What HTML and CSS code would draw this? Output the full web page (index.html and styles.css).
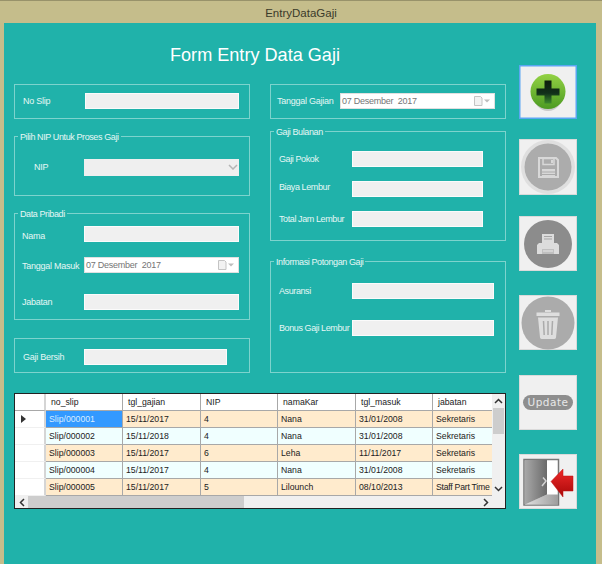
FILE: index.html
```html
<!DOCTYPE html>
<html lang="en">
<head>
    <meta charset="UTF-8">
    <meta name="viewport" content="width=device-width, initial-scale=1.0">
    <title>EntryDataGaji</title>
    <link rel="stylesheet" href="styles.css">
</head>
<body>

<div id="window">
    <div id="titlebar">EntryDataGaji</div>

    <div id="client">
        <div id="formArea">
            <h1>Form Entry Data Gaji</h1>

            <div id="columns">
                <div class="col">
                    <div class="group slipBox">
                        <div class="row"><label class="lblSlip">No Slip</label><input class="field w154" type="text"></div>
                    </div>

                    <div class="group nipBox">
                        <span class="legend">Pilih NIP Untuk Proses Gaji</span>
                        <div class="row rowTall"><label class="lblNip">NIP</label>
                            <div class="select">
                                <svg width="10" height="6" viewBox="0 0 10 6"><path d="M1 1l4 4 4-4" fill="none" stroke="#b5b5b5" stroke-width="1.5"/></svg>
                            </div>
                        </div>
                    </div>

                    <div class="group pribadiBox">
                        <span class="legend">Data Pribadi</span>
                        <div class="row"><label class="lblPribadi down2">Nama</label><input class="field w155" type="text"></div>
                        <div class="row gap15"><label class="lblPribadi down1">Tanggal Masuk</label>
                            <div class="date w155">
                                <span class="dateText">07 Desember&nbsp; 2017</span>
                                <svg width="18" height="10" viewBox="0 0 18 10"><path d="M1.500 .5h6l1.500 1.500v7.500h-7.500z" fill="#f2f2f2" stroke="#c4c4c4"/><path d="M11 3.500h6l-3 3z" fill="#bdbdbd"/></svg>
                            </div>
                        </div>
                        <div class="row gap21"><label class="lblPribadi">Jabatan</label><input class="field w155" type="text"></div>
                    </div>

                    <div class="group bersihBox">
                        <div class="row"><label class="lblSlip">Gaji Bersih</label><input class="field w143" type="text"></div>
                    </div>
                </div>

                <div class="col">
                    <div class="group slipBox">
                        <div class="row"><label class="lblTanggal">Tanggal Gajian</label>
                            <div class="date w155">
                                <span class="dateText">07 Desember&nbsp; 2017</span>
                                <svg width="18" height="10" viewBox="0 0 18 10"><path d="M1.500 .5h6l1.500 1.500v7.500h-7.500z" fill="#f2f2f2" stroke="#c4c4c4"/><path d="M11 3.500h6l-3 3z" fill="#bdbdbd"/></svg>
                            </div>
                        </div>
                    </div>

                    <div class="group bulananBox">
                        <span class="legend">Gaji Bulanan</span>
                        <div class="row"><label class="lblRight">Gaji Pokok</label><input class="field w131" type="text"></div>
                        <div class="row gap14"><label class="lblRight up3">Biaya Lembur</label><input class="field w131" type="text"></div>
                        <div class="row gap14"><label class="lblRight">Total Jam Lembur</label><input class="field w131" type="text"></div>
                    </div>

                    <div class="group potonganBox">
                        <span class="legend">Informasi Potongan Gaji</span>
                        <div class="row"><label class="lblRight">Asuransi</label><input class="field w142" type="text"></div>
                        <div class="row gap21"><label class="lblRight">Bonus Gaji Lembur</label><input class="field w142" type="text"></div>
                    </div>
                </div>
            </div>

            <div id="dataGrid">
                <div class="gridTop">
                    <table>
                        <thead>
                            <tr><th class="rowHead"></th><th>no_slip</th><th>tgl_gajian</th><th>NIP</th><th>namaKar</th><th>tgl_masuk</th><th>jabatan</th></tr>
                        </thead>
                        <tbody>
                            <tr class="odd"><td class="rowHead"><span class="pointer"></span></td><td class="selected">Slip/000001</td><td>15/11/2017</td><td>4</td><td>Nana</td><td>31/01/2008</td><td>Sekretaris</td></tr>
                            <tr class="even"><td class="rowHead"></td><td>Slip/000002</td><td>15/11/2018</td><td>4</td><td>Nana</td><td>31/01/2008</td><td>Sekretaris</td></tr>
                            <tr class="odd"><td class="rowHead"></td><td>Slip/000003</td><td>15/11/2017</td><td>6</td><td>Leha</td><td>11/11/2017</td><td>Sekretaris</td></tr>
                            <tr class="even"><td class="rowHead"></td><td>Slip/000004</td><td>15/11/2017</td><td>4</td><td>Nana</td><td>31/01/2008</td><td>Sekretaris</td></tr>
                            <tr class="odd"><td class="rowHead"></td><td>Slip/000005</td><td>15/11/2017</td><td>5</td><td>Lilounch</td><td>08/10/2013</td><td class="tight">Staff Part Time</td></tr>
                        </tbody>
                    </table>
                    <div class="vScroll">
                        <div class="arrowBox"><svg width="9" height="6" viewBox="0 0 9 6"><path d="M1 5l3.500-3.500 3.500 3.500" fill="none" stroke="#333" stroke-width="1.500"/></svg></div>
                        <div class="vThumb"></div>
                        <div class="spacer"></div>
                        <div class="arrowBox"><svg width="9" height="6" viewBox="0 0 9 6"><path d="M1 1l3.500 3.500 3.500-3.500" fill="none" stroke="#333" stroke-width="1.500"/></svg></div>
                    </div>
                </div>
                <div class="hScroll">
                    <div class="arrowBox"><svg width="6" height="9" viewBox="0 0 6 9"><path d="M5 1l-3.500 3.500 3.500 3.500" fill="none" stroke="#333" stroke-width="1.500"/></svg></div>
                    <div class="hThumb"></div>
                    <div class="spacer"></div>
                    <div class="arrowBox"><svg width="6" height="9" viewBox="0 0 6 9"><path d="M1 1l3.500 3.500-3.500 3.500" fill="none" stroke="#333" stroke-width="1.500"/></svg></div>
                    <div class="corner"></div>
                </div>
            </div>
        </div>

        <div id="buttons">
            <button class="btn btnAdd" type="button">
                <svg viewBox="0 0 58 54" width="58" height="54">
                    <defs>
                        <linearGradient id="addFill" x1="0" y1="0" x2="0" y2="1"><stop offset="0" stop-color="#93d244"/><stop offset="1" stop-color="#4c9a22"/></linearGradient>
                        <linearGradient id="addPlus" x1="0" y1="0" x2="0" y2="1"><stop offset="0" stop-color="#0d1f0c"/><stop offset=".55" stop-color="#12301a"/><stop offset="1" stop-color="#3c8a2c"/></linearGradient>
                    </defs>
                    <ellipse cx="29" cy="29" rx="15" ry="17" fill="#c9c9c9"/>
                    <circle cx="29" cy="26.500" r="17.500" fill="url(#addFill)"/>
                    <path d="M25.500 15.500h7v8h8v7h-8v8h-7v-8h-8v-7h8z" fill="url(#addPlus)"/>
                </svg>
            </button>

            <button class="btn btnSave" type="button">
                <svg viewBox="0 0 58 56" width="58" height="56">
                    <circle cx="29" cy="28" r="27" fill="#dfdfdf"/>
                    <circle cx="29" cy="28" r="23.500" fill="#acacac"/>
                    <path d="M20 19h17l2 2v17h-19z" fill="none" stroke="#d8d8d8" stroke-width="2"/>
                    <path d="M24 19.500h11v6h-11z" fill="none" stroke="#d8d8d8" stroke-width="1.500"/>
                    <path d="M23 30h13v8h-13z" fill="#d8d8d8"/>
                    <path d="M23 33h13M23 35.500h13" stroke="#acacac"/>
                    <path d="M32 21h2v3h-2z" fill="#d8d8d8"/>
                </svg>
            </button>

            <button class="btn btnPrint" type="button">
                <svg viewBox="0 0 58 55" width="58" height="55">
                    <circle cx="29" cy="28" r="24" fill="#8c8c8c"/>
                    <path d="M23 18h12v10h-12z" fill="#dcdcdc"/>
                    <path d="M25 20.500h8M25 23h8" stroke="#a5a5a5"/>
                    <path d="M20 27h18l2 2v9h-22v-9z" fill="#dcdcdc"/>
                    <path d="M23 33h12v5h-12z" fill="#c0c0c0"/>
                    <path d="M24 35h10" stroke="#e8e8e8"/>
                </svg>
            </button>

            <button class="btn btnTrash" type="button">
                <svg viewBox="0 0 58 55" width="58" height="55">
                    <circle cx="29" cy="28" r="26.500" fill="#ababab"/>
                    <path d="M26 15h6v2h-6z" fill="#dedede"/>
                    <path d="M17.500 17.500h23v3.500h-23z" fill="#dedede"/>
                    <path d="M19 22.500h20l-2 20a2 2 0 0 1-2 1.500h-12a2 2 0 0 1-2-1.500z" fill="#dedede"/>
                    <path d="M24.500 26l.7 14M29 26v14M33.500 26l-.7 14" stroke="#ababab" stroke-width="1.500"/>
                </svg>
            </button>

            <button class="btn btnUpdate" type="button"><span class="pill">Update</span></button>

            <button class="btn btnExit" type="button">
                <svg viewBox="0 0 58 55" width="58" height="55">
                    <defs>
                        <linearGradient id="doorFill" x1="0" y1="0" x2="1" y2="0"><stop offset="0" stop-color="#a8a8a8"/><stop offset="1" stop-color="#6a6a6a"/></linearGradient>
                        <linearGradient id="floorFill" x1="0" y1="0" x2="1" y2="0"><stop offset="0" stop-color="#e2e2e2"/><stop offset="1" stop-color="#9d9d9d"/></linearGradient>
                        <linearGradient id="arrowFill" x1="0" y1="0" x2="0" y2="1"><stop offset="0" stop-color="#ee2a2a"/><stop offset="1" stop-color="#a80808"/></linearGradient>
                    </defs>
                    <path d="M5 5.500h34.500v45.500h-34.500z" fill="#fff" stroke="#777" stroke-width="1.500"/>
                    <path d="M5.500 50.500l22.500-10h11v10z" fill="url(#floorFill)"/>
                    <path d="M6 6h22v34.500l-22 10z" fill="url(#doorFill)"/>
                    <path d="M24 23.500l3 3.500-4 5" fill="none" stroke="#d4d4d4" stroke-width="1.500"/>
                    <path d="M32 27.500l12-12.500v7h10v15h-10v6z" fill="url(#arrowFill)" stroke="#c01010" stroke-width=".5"/>
                </svg>
            </button>
        </div>
    </div>
</div>

</body>
</html>
```

FILE: styles.css
```css
body {
    margin: 0;
    padding: 0;
    font-family: 'Liberation Sans', Arial, sans-serif;
    font-size: 9px;
    letter-spacing: -.25px;
    background-color: #c5bd8b;
    overflow: hidden;
}

#window {
    width: 602px;
    height: 564px;
    display: flex;
    flex-direction: column;
}

#titlebar {
    height: 23px;
    line-height: 25px;
    box-sizing: border-box;
    border-top: 1px solid #98926a;
    text-align: center;
    font-size: 11.500px;
    letter-spacing: 0;
    color: #3a3a2a;
    flex: none;
}

#client {
    flex: 1;
    margin: 0 6px 0 4px;
    padding-left: 10px;
    background-color: #20b2aa;
    display: flex;
    gap: 13px;
}

#formArea {
    width: 492px;
}

h1 {
    margin: 0;
    padding: 16px 0 13px 156px;
    font-size: 18.100px;
    letter-spacing: 0;
    line-height: 32px;
    font-weight: normal;
    color: #fff;
}

#columns {
    display: flex;
    gap: 20px;
}

.col {
    width: 236px;
    display: flex;
    flex-direction: column;
}

.group {
    position: relative;
    box-sizing: border-box;
    border: 1.5px solid #7dd3cd;
    padding-left: 7px;
}

.legend {
    position: absolute;
    top: -6px;
    left: 3px;
    padding: 0 2px;
    background-color: #20b2aa;
    color: #e6f7f5;
    letter-spacing: -.4px;
    line-height: 12px;
    white-space: nowrap;
}

.slipBox { height: 35px; padding-top: 7.5px; }
.nipBox { height: 60px; margin-top: 17px; padding-top: 21.500px; }
.pribadiBox { height: 107px; margin-top: 17px; padding-top: 11.500px; }
.bersihBox { height: 35px; margin-top: 18px; padding-top: 9.500px; }
.bulananBox { height: 110px; margin-top: 12px; padding-top: 18.500px; }
.potonganBox { height: 112px; margin-top: 20px; padding-top: 20.500px; }

.row {
    display: flex;
    align-items: center;
    height: 16px;
}

.rowTall { height: 17px; }

.gap14 { margin-top: 14px; }
.gap15 { margin-top: 15px; }
.gap21 { margin-top: 21px; }

label {
    color: #e6f7f5;
    white-space: nowrap;
    flex: none;
}

.lblSlip { width: 61.500px; padding-left: 1px; box-sizing: border-box; }
.lblNip { width: 61.500px; padding-left: 12px; box-sizing: border-box; }
.lblPribadi { width: 61.500px; box-sizing: border-box; }
.lblTanggal { width: 62.500px; margin-left: -1px; box-sizing: border-box; }
.lblRight { width: 73.500px; padding-left: 1px; box-sizing: border-box; letter-spacing: -.4px; }

.down1 { margin-top: 2px; }
.down2 { margin-top: 4px; }
.up3 { margin-bottom: 4px; }

.field {
    box-sizing: border-box;
    height: 16px;
    padding: 0;
    margin: 0;
    border: 1.5px solid #fbfbfb;
    background-color: #f0f0f0;
    flex: none;
}

.w131 { width: 131px; }
.w142 { width: 142px; }
.w143 { width: 143px; }
.w154 { width: 154px; margin-left: 1px; }
.w155 { width: 155px; }

.select {
    box-sizing: border-box;
    width: 155px;
    height: 17px;
    background-color: #efefef;
    display: flex;
    align-items: center;
    justify-content: flex-end;
    padding-right: 1px;
}

.date {
    box-sizing: border-box;
    height: 16px;
    border: 1px solid #e0e0e0;
    background-color: #fff;
    display: flex;
    align-items: center;
    justify-content: space-between;
    padding: 0 3px 0 1.500px;
    flex: none;
}

.dateText {
    color: #757575;
}

#dataGrid {
    margin-top: 20px;
    box-sizing: border-box;
    height: 116px;
    border: 1px solid #222;
    background-color: #f0f0f0;
}

.gridTop {
    display: flex;
    height: 102px;
}

table {
    width: 477px;
    border-collapse: separate;
    border-spacing: 0;
    table-layout: fixed;
    color: #222;
    font-size: 8.700px;
    letter-spacing: 0;
    flex: none;
}

th, td {
    height: 17px;
    padding: 0 0 0 3px;
    box-sizing: border-box;
    text-align: left;
    font-weight: normal;
    white-space: nowrap;
    overflow: hidden;
    border-right: 1px solid #a8a8a8;
    border-bottom: 1px solid #a8a8a8;
}

th {
    padding-left: 5px;
    background-color: #fff;
}

th:first-child { width: 31px; }
th:nth-child(2) { width: 77px; }
th:nth-child(3) { width: 78px; }
th:nth-child(4) { width: 77px; }
th:nth-child(5) { width: 78px; }
th:nth-child(6) { width: 77px; }
th:nth-child(7) { width: 59px; }

th:last-child, td:last-child {
    border-right: none;
}

td.tight { letter-spacing: -.25px; }

.odd td { background-color: #ffebcd; }
.even td { background-color: #f0ffff; }

.odd td.rowHead, .even td.rowHead, th.rowHead {
    background-color: #fff;
    border-right: 2px solid #d5d5d5;
    border-bottom: 1px solid #f0f0f0;
}

th.rowHead { border-bottom-color: #a8a8a8; }

.odd td.selected {
    background-color: #3399ff;
    color: #d8ecff;
}

.pointer {
    display: block;
    width: 0;
    height: 0;
    margin-left: 3px;
    border-left: 5px solid #333;
    border-top: 4px solid transparent;
    border-bottom: 4px solid transparent;
}

.vScroll {
    width: 13px;
    display: flex;
    flex-direction: column;
    background-color: #f0f0f0;
}

.arrowBox {
    flex: none;
    display: flex;
    align-items: center;
    justify-content: center;
    height: 14px;
}

.vThumb {
    height: 26px;
    margin: 0 1px;
    background-color: #cdcdcd;
    flex: none;
}

.spacer { flex: 1; }

.hScroll {
    height: 12px;
    display: flex;
    background-color: #f0f0f0;
}

.hScroll .arrowBox {
    width: 13px;
    height: 12px;
}

.hThumb {
    width: 216px;
    background-color: #cdcdcd;
    flex: none;
}

.corner {
    width: 13px;
    flex: none;
}

#buttons {
    width: 58px;
    padding-top: 42px;
    display: flex;
    flex-direction: column;
}

.btn {
    display: block;
    width: 58px;
    height: 55px;
    padding: 0;
    margin: 0;
    border: none;
    background-color: #f0f0f0;
    box-shadow: inset 0 0 0 1px #dadada;
    flex: none;
}

.btn svg { display: block; }

.btnAdd { height: 54px; box-shadow: inset 0 0 0 1.500px #5aa6f2; }
.btnSave { height: 56px; margin-top: 20px; }
.btnPrint { margin-top: 21px; }
.btnTrash { margin-top: 24px; }
.btnUpdate { margin-top: 25px; }
.btnExit { margin-top: 24px; }

.pill {
    display: block;
    width: 50px;
    margin: 0 auto;
    height: 15px;
    line-height: 15px;
    border-radius: 8px;
    background-color: #8e8e8e;
    color: #e8e8e8;
    font-family: 'DejaVu Sans', sans-serif;
    font-size: 10.500px;
    letter-spacing: .5px;
    text-align: center;
}
```
